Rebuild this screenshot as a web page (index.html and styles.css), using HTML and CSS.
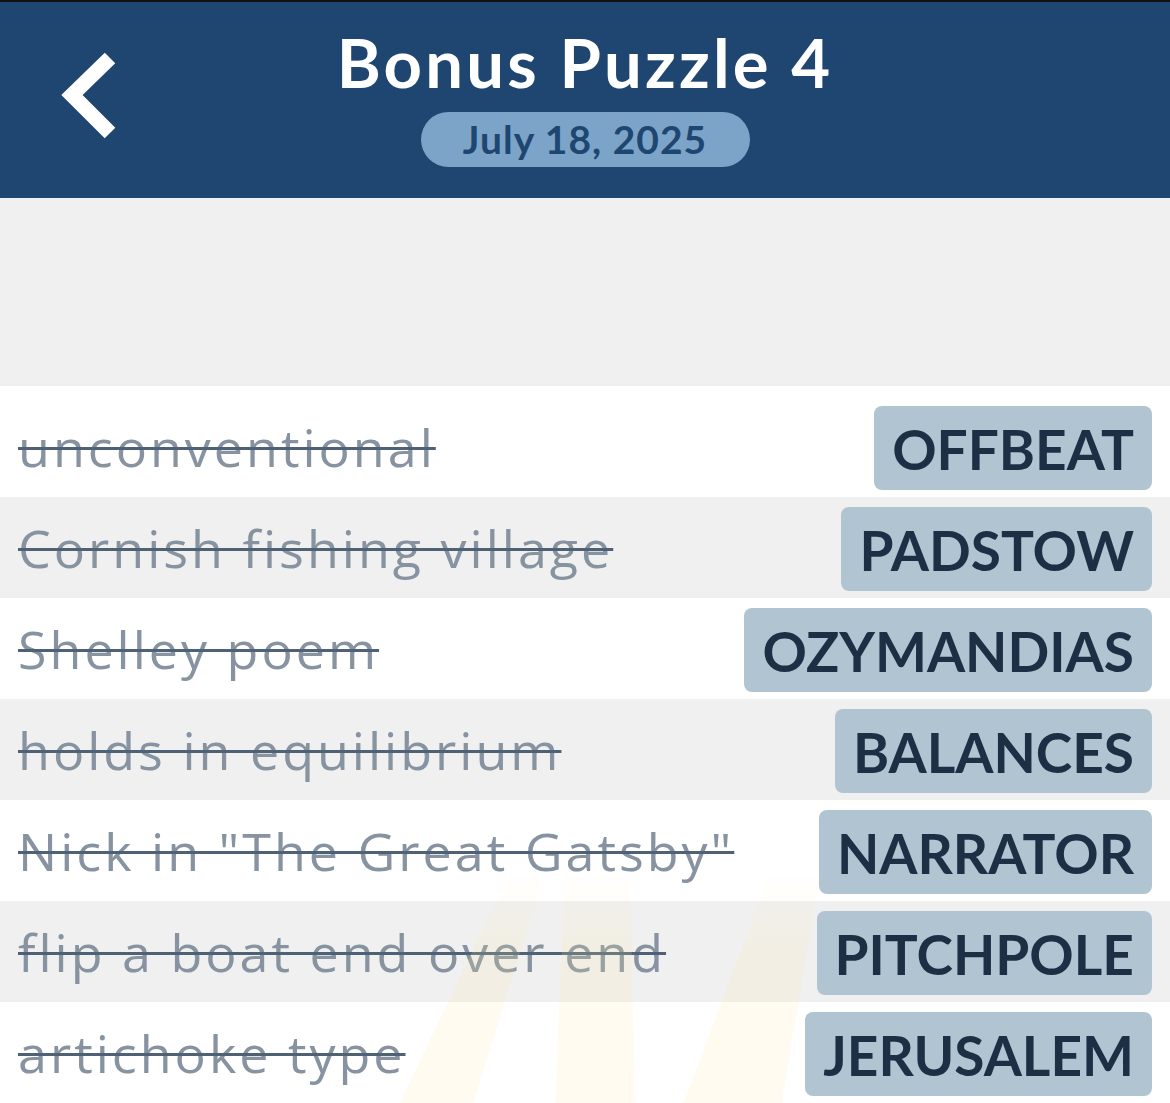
FILE: index.html
```html
<!DOCTYPE html>
<html lang="en">
<head>
  <meta charset="UTF-8" />
  <title>Bonus Puzzle 4</title>
  <link rel="stylesheet" href="styles.css">
</head>
<body>

  <div class="header">
    <a class="back" href="#">
      <svg width="70" height="92" viewBox="0 0 70 92">
        <polyline points="58,8 20,45 58,83" fill="none" stroke="#fff" stroke-width="15" stroke-linecap="butt" stroke-linejoin="miter" />
      </svg>
    </a>
    <h1 class="title">Bonus Puzzle 4</h1>
    <div class="date">July 18, 2025</div>
  </div>

  <div class="spacer"></div>

  <div class="list">
    <svg class="rays" width="1170" height="240" viewBox="0 0 1170 240">
      <defs>
        <linearGradient id="fade" x1="0" y1="0" x2="0" y2="1">
          <stop offset="0" stop-color="#ffe9a8" stop-opacity="0" />
          <stop offset="0.3" stop-color="#ffe9a8" stop-opacity="1" />
          <stop offset="1" stop-color="#ffe9a8" stop-opacity="1" />
        </linearGradient>
      </defs>
      <polygon points="395,240 470,240 545,0 510,0" fill="url(#fade)" />
      <polygon points="555,240 635,240 630,0 565,0" fill="url(#fade)" />
      <polygon points="680,240 780,240 820,0 770,0" fill="url(#fade)" />
    </svg>

    <div class="row">
      <span class="clue">unconventional</span>
      <span class="answer">OFFBEAT</span>
    </div>
    <div class="row alt">
      <span class="clue">Cornish fishing village</span>
      <span class="answer">PADSTOW</span>
    </div>
    <div class="row">
      <span class="clue">Shelley poem</span>
      <span class="answer">OZYMANDIAS</span>
    </div>
    <div class="row alt">
      <span class="clue">holds in equilibrium</span>
      <span class="answer">BALANCES</span>
    </div>
    <div class="row">
      <span class="clue">Nick in "The Great Gatsby"</span>
      <span class="answer">NARRATOR</span>
    </div>
    <div class="row alt">
      <span class="clue">flip a boat end over end</span>
      <span class="answer">PITCHPOLE</span>
    </div>
    <div class="row">
      <span class="clue">artichoke type</span>
      <span class="answer">JERUSALEM</span>
    </div>
  </div>

</body>
</html>
```

FILE: styles.css
```css
body {
  margin: 0;
  font-family: Lato, "Open Sans", sans-serif;
  background-color: #f0f0f0;
  overflow: hidden;
}

.header {
  position: relative;
  height: 196px;
  background-color: #1f4670;
  border-top: 2px solid #111;
  display: flex;
  flex-direction: column;
  align-items: center;
}

.back {
  position: absolute;
  left: 52px;
  top: 48px;
  display: block;
}

.title {
  margin: 22px 0 0;
  color: #fff;
  font-size: 67px;
  font-weight: 700;
  line-height: 76px;
  letter-spacing: 3.2px;
}

.date {
  margin-top: 12px;
  height: 55px;
  width: 329px;
  box-sizing: border-box;
  border-radius: 28px;
  background-color: #7ba4c8;
  color: #1f4670;
  font-size: 39px;
  font-weight: 700;
  line-height: 55px;
  letter-spacing: 1px;
  text-align: center;
}

.spacer {
  height: 188px;
}

.list {
  position: relative;
  padding-top: 10px;
  background-color: #fff;
}

.rays {
  position: absolute;
  left: 0;
  bottom: -10px;
  opacity: 0.16;
  pointer-events: none;
  z-index: 2;
}

.row {
  height: 101px;
  display: flex;
  align-items: center;
  justify-content: space-between;
  padding: 0 18px;
  background-color: #ffffff;
}

.row.alt {
  background-color: #f0f0f0;
}

.clue {
  font-family: "Open Sans", sans-serif;
  color: #8793a0;
  font-size: 52px;
  letter-spacing: 3px;
  text-decoration: line-through;
  text-decoration-color: #4f6275;
  text-decoration-thickness: 3px;
  white-space: nowrap;
}

.answer {
  height: 84px;
  padding: 0 18px;
  border-radius: 8px;
  background-color: #b0c4d2;
  color: #1c2f45;
  font-size: 55px;
  font-weight: 700;
  line-height: 86px;
  margin-top: 2px;
}
```
